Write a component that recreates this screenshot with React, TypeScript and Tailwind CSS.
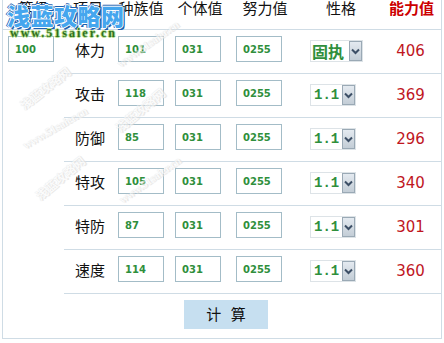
import React from "react";

const rows = [
  { name: "体力", base: "101", nat: "固执", val: "406" },
  { name: "攻击", base: "118", nat: "1.1", val: "369" },
  { name: "防御", base: "85", nat: "1.1", val: "296" },
  { name: "特攻", base: "105", nat: "1.1", val: "340" },
  { name: "特防", base: "87", nat: "1.1", val: "301" },
  { name: "速度", base: "114", nat: "1.1", val: "360" },
];

const cjk = "font-['Noto_Sans_CJK_SC','Noto_Sans',sans-serif]";

function Box({ v }: { v: string }) {
  return (
    <div className="w-[46px] h-[26px] border border-[#a3bcc7] bg-white flex items-center pl-[6px] font-['DejaVu_Sans',sans-serif] font-bold text-[10px] text-[#2f8f3c]">
      {v}
    </div>
  );
}

function Arrow() {
  return (
    <div className="w-[13px] h-[20px] border border-[#9aa9b5] bg-gradient-to-b from-[#e4eaf0] to-[#c3cdd6] flex items-center justify-center">
      <svg width="9" height="7" viewBox="0 0 9 7">
        <path d="M1 1.5 L4.5 5 L8 1.5" stroke="#3d4f66" strokeWidth="2" fill="none" />
      </svg>
    </div>
  );
}

function Sel({ v }: { v: string }) {
  const isNum = v === "1.1";
  return (
    <div
      className={`h-[22px] border border-[#dde3e7] bg-white flex items-center justify-between ${isNum ? "w-[46px] pl-[3px]" : "w-[53px] pl-[1px]"}`}
    >
      {isNum ? (
        <span className="font-['Liberation_Mono',monospace] font-bold text-[14px] leading-[16px] text-[#2f8f3c]">{v}</span>
      ) : (
        <span className={`${cjk} font-bold text-[16px] leading-[18px] text-[#2f8f3c]`}>{v}</span>
      )}
      <Arrow />
    </div>
  );
}

function WM({ text, x, y, r, size, serif }: { text: string; x: number; y: number; r: number; size: number; serif?: boolean }) {
  return (
    <div
      className={`absolute pointer-events-none whitespace-nowrap text-[#fafafa] font-bold opacity-70 [text-shadow:0_0_1px_#cfcfcf,1px_1px_0_#e2e2e2] ${serif ? "font-['Liberation_Serif',serif]" : cjk}`}
      style={{ left: x, top: y, transform: `translate(-50%,-50%) rotate(${r}deg)`, fontSize: size }}
    >
      {text}
    </div>
  );
}

export default function App() {
  return (
    <div className="relative w-[444px] h-[343px] bg-white overflow-hidden">
      <div className="ml-[2px] w-[440px] border-x border-b border-[#cfdce5]">
        {/* header */}
        <div className={`flex h-[30px] border-b border-[#cfdce5] text-[15px] leading-[15px] text-[#111] ${cjk}`}>
          <div className="w-[61px] text-center">等级</div>
          <div className="w-[48px] text-center">项目</div>
          <div className="w-[58px] text-center">种族值</div>
          <div className="w-[60px] text-center">个体值</div>
          <div className="w-[70px] text-center">努力值</div>
          <div className="w-[82px] text-center">性格</div>
          <div className="flex-1 text-center font-bold text-[#cc0000]">能力值</div>
        </div>
        {/* body */}
        <div className="flex">
          <div className="w-[61px] pl-[5px] pt-[6px]">
            <Box v="100" />
          </div>
          <div className="flex-1 flex flex-col">
            {rows.map((r) => (
              <div key={r.name} className="flex h-[44px] border-b border-[#cfdce5]">
                <div className={`w-[48px] pl-[11px] pt-[12px] text-[15px] leading-[16px] text-[#111] ${cjk}`}>{r.name}</div>
                <div className="w-[58px] pl-[6px] pt-[6px]">
                  <Box v={r.base} />
                </div>
                <div className="w-[60px] pl-[5px] pt-[6px]">
                  <Box v="031" />
                </div>
                <div className="w-[70px] pl-[6px] pt-[6px]">
                  <Box v="0255" />
                </div>
                <div className="w-[82px] pl-[10px] pt-[10px]">
                  <Sel v={r.nat} />
                </div>
                <div className="flex-1 text-center pt-[14px] pr-[2px] font-['DejaVu_Sans',sans-serif] text-[15px] leading-[15px] text-[#c0161e]">
                  {r.val}
                </div>
              </div>
            ))}
            <div className="h-[44px] pt-[6px] pl-[120px]">
              <button className={`w-[84px] h-[29px] bg-[#c6dff0] text-[15px] text-[#111] tracking-[3px] pl-[3px] ${cjk}`}>计 算</button>
            </div>
          </div>
        </div>
      </div>

      {/* faint diagonal watermarks */}
      <WM text="浅蓝攻略网" x={45} y={88} r={-38} size={12} />
      <WM text="www.51saier.cn" x={148} y={44} r={-35} size={11} serif />
      <WM text="www.51saier.cn" x={55} y={128} r={-30} size={11} serif />
      <WM text="浅蓝攻略网" x={60} y={178} r={-40} size={12} />
      <WM text="www.51saier.cn" x={150} y={180} r={-35} size={11} serif />
      <WM text="浅蓝攻略网" x={140} y={110} r={-40} size={12} />

      {/* logo overlay */}
      <div className="absolute left-[7px] top-[3px] pointer-events-none">
        <div
          className={`${cjk} font-black text-[23px] leading-[25px] tracking-[0.5px] text-[#45a6ee] [text-shadow:1px_0_0_#fff,-1px_0_0_#fff,0_1px_0_#fff,0_-1px_0_#fff,2px_2px_0_#1f62b0,-2px_0_0_#1f62b0,0_-2px_0_#1f62b0,2px_0_0_#1f62b0]`}
        >
          浅蓝攻略网
        </div>
        <div className="ml-[3px] font-['Liberation_Serif',serif] font-bold text-[12px] leading-[10px] tracking-[2px] text-[#2f6f1f] [text-shadow:1px_0_0_#b7e08e,-1px_0_0_#b7e08e,0_1px_0_#b7e08e,0_-1px_0_#b7e08e]">
          www.51saier.cn
        </div>
      </div>
    </div>
  );
}
